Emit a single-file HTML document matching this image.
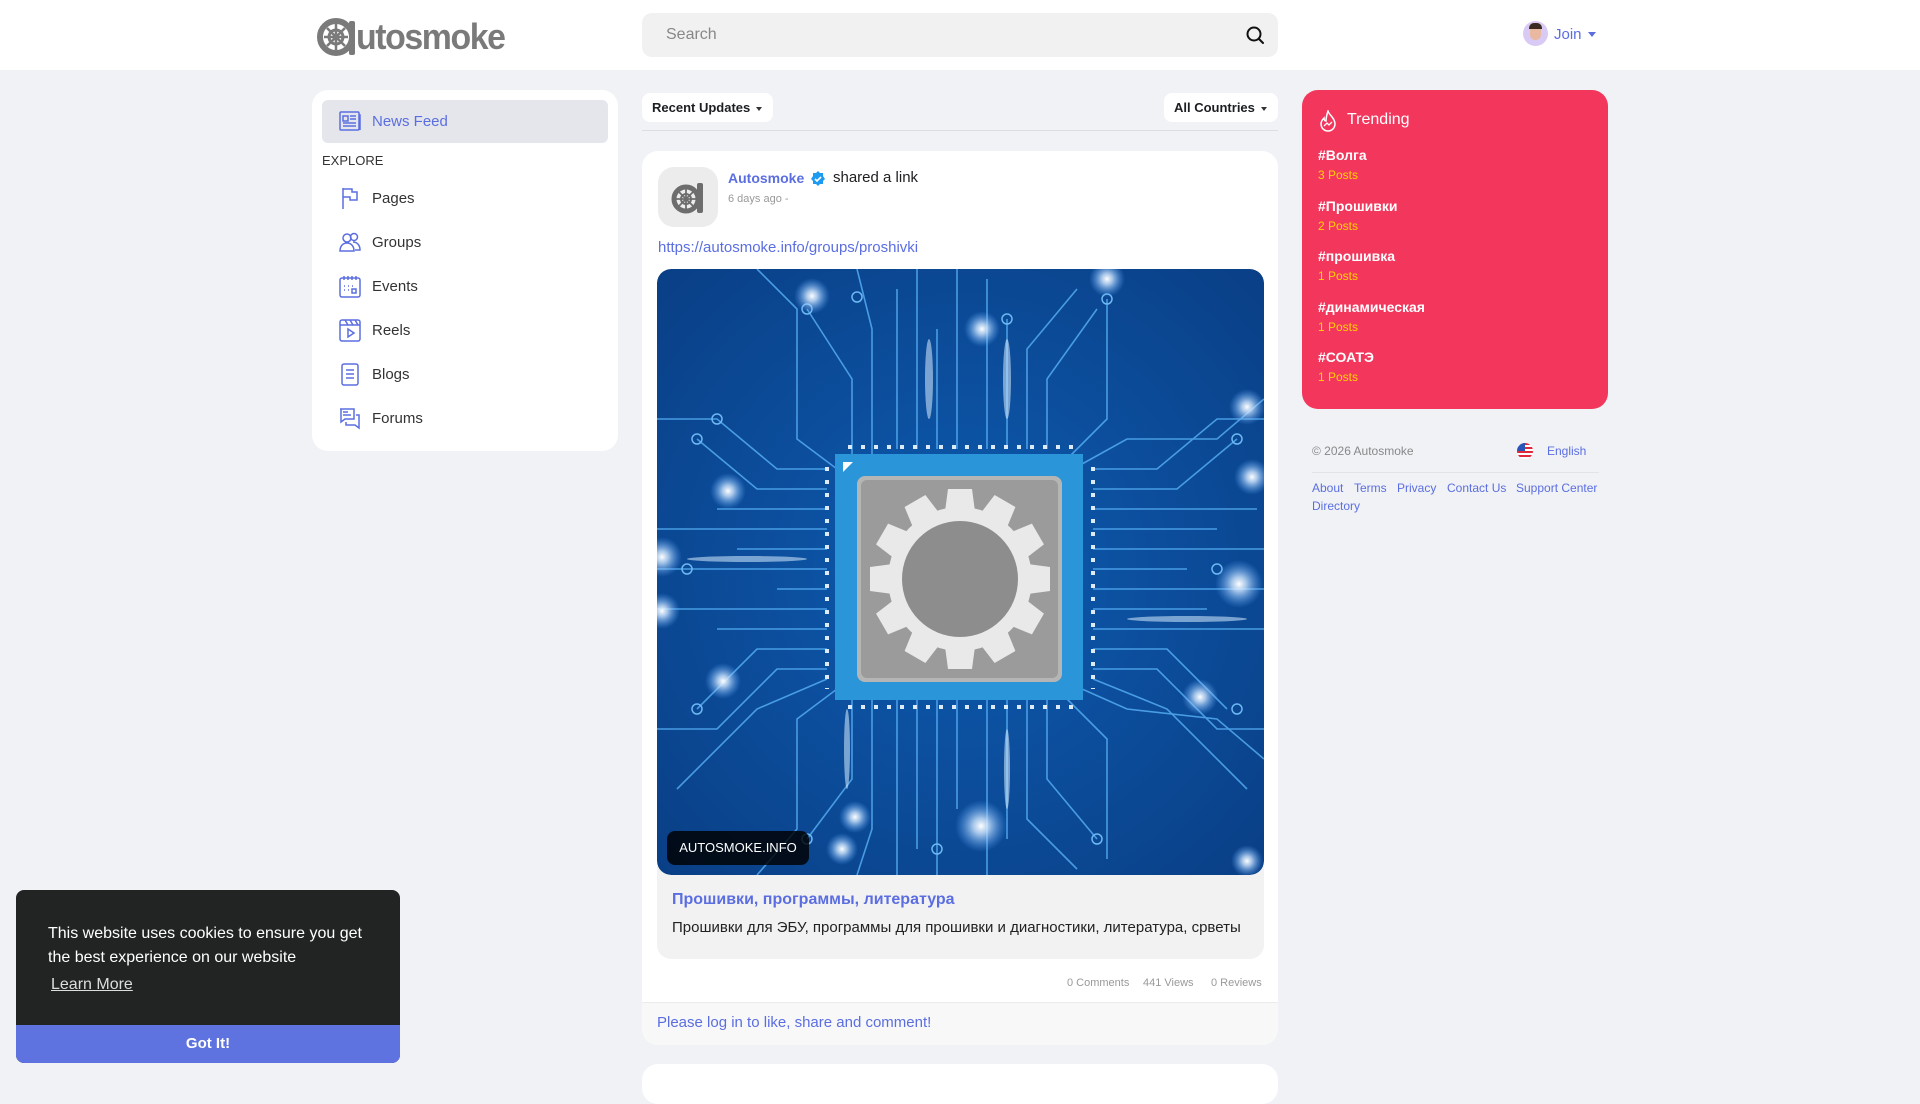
<!DOCTYPE html>
<html><head><meta charset="utf-8">
<style>
*{box-sizing:border-box;margin:0;padding:0}
body{width:1920px;height:1080px;overflow:hidden;background:#f0f2f5;font-family:"Liberation Sans","Noto Sans CJK SC",sans-serif;position:relative;color:#1c1e21}
.abs{position:absolute}
.hdr{left:0;top:0;width:1920px;height:70px;background:#fff}
.card{background:#fff;border-radius:16px}
.nav{left:322px;height:44px;width:286px;display:flex;align-items:center;padding-left:16px;font-size:15px;color:#333}
.nav svg{width:24px;height:24px;margin-right:10px}
.tr b{display:block;color:#fff;font-size:14px;font-weight:bold}
.tr span{display:block;color:#ffd400;font-size:12px;margin-top:5px}
.flink{color:#5b6ee1;font-size:12px}
.st{font-size:11px;color:#999}
</style></head><body>
<div class="abs hdr"></div>
<div class="abs" style="left:316px;top:16px;height:42px;display:flex;align-items:center">
<svg width="42" height="42" viewBox="0 0 42 42"><circle cx="20" cy="21" r="16" fill="none" stroke="#7a7a7a" stroke-width="6"/><circle cx="20" cy="21" r="7" fill="none" stroke="#7a7a7a" stroke-width="3"/><path d="M20 8v26M8 21h24M11 12l18 18M29 12L11 30" stroke="#7a7a7a" stroke-width="2.5"/><rect x="33" y="5" width="6" height="34" rx="2" fill="#7a7a7a"/></svg>
<span style="font-size:36px;font-weight:bold;color:#7a7a7a;letter-spacing:-1.5px;margin-left:-2px;line-height:1;display:inline-block;transform:scaleX(.94);transform-origin:left">utosmoke</span></div>
<div class="abs" style="left:642px;top:13px;width:636px;height:44px;background:#f1f1f1;border-radius:10px"></div>
<div class="abs" style="left:666px;top:26px;font-size:16px;color:#888">Search</div>
<svg class="abs" style="left:1245px;top:25px" width="20" height="20" viewBox="0 0 20 20"><circle cx="9" cy="9" r="6.5" fill="none" stroke="#111" stroke-width="2"/><path d="M14 14l4 4" stroke="#111" stroke-width="2" stroke-linecap="round"/></svg>
<div class="abs" style="left:1523px;top:21px;width:25px;height:25px;border-radius:50%;background:#d8c9f5"></div>
<div class="abs" style="left:1530px;top:25px;width:11px;height:15px;border-radius:5px;background:#e8b9a0"></div>
<div class="abs" style="left:1529px;top:23px;width:13px;height:6px;border-radius:5px 5px 0 0;background:#3a2a22"></div>
<div class="abs" style="left:1554px;top:26px;font-size:15px;color:#5b6ee1">Join</div>
<div class="abs" style="left:1588px;top:32px;border:4px solid transparent;border-top:5px solid #5b6ee1"></div>

<div class="abs card" style="left:312px;top:90px;width:306px;height:361px"></div>
<div class="abs" style="left:322px;top:100px;width:286px;height:43px;background:#e4e6eb;border-radius:6px"></div>
<div class="abs nav" style="top:99px;color:#5b6ee1"><svg viewBox="0 0 24 24" fill="none" stroke="#5b6ee1" stroke-width="1.5"><rect x="2" y="3" width="19" height="18" rx="1"/><path d="M21 6h1v15M5 7h5v5H5zM12 7h6M12 10h6M5 14h13M5 17h13"/></svg>News Feed</div>
<div class="abs" style="left:322px;top:153px;font-size:13px;color:#333">EXPLORE</div>
<div class="abs nav" style="top:176px"><svg viewBox="0 0 24 24" fill="none" stroke="#5b6ee1" stroke-width="1.5"><path d="M5 2v21M5 3h9v3h5v8h-7v-3H5"/></svg>Pages</div>
<div class="abs nav" style="top:220px"><svg viewBox="0 0 24 24" fill="none" stroke="#5b6ee1" stroke-width="1.5"><circle cx="9" cy="8" r="4"/><circle cx="16" cy="7" r="3.5"/><path d="M2 21c0-5 3-8 7-8s7 3 7 8zM15 12c4 0 7 3 7 8h-5"/></svg>Groups</div>
<div class="abs nav" style="top:264px"><svg viewBox="0 0 24 24" fill="none" stroke="#5b6ee1" stroke-width="1.5"><rect x="2" y="4" width="20" height="19" rx="2"/><path d="M6 2v4M10 2v4M14 2v4M18 2v4M6 12h1M10 12h1M14 12h1M6 16h1M10 16h1"/><rect x="14" y="15" width="4" height="4"/></svg>Events</div>
<div class="abs nav" style="top:308px"><svg viewBox="0 0 24 24" fill="none" stroke="#5b6ee1" stroke-width="1.5"><rect x="2" y="2" width="20" height="21" rx="2"/><path d="M2 7h20M7 2l3 5M12 2l3 5M17 2l3 5M10 11v8l6-4z"/></svg>Reels</div>
<div class="abs nav" style="top:352px"><svg viewBox="0 0 24 24" fill="none" stroke="#5b6ee1" stroke-width="1.5"><rect x="4" y="2" width="16" height="21" rx="2"/><path d="M8 8h8M8 12h8M8 16h8"/></svg>Blogs</div>
<div class="abs nav" style="top:396px"><svg viewBox="0 0 24 24" fill="none" stroke="#5b6ee1" stroke-width="1.5"><path d="M2 3h14v10H7l-4 3V3zM8 16v3h9l4 3V9h-3M5 6h5M5 9h8"/></svg>Forums</div>

<div class="abs card" style="left:642px;top:93px;width:131px;height:29px;border-radius:8px"></div>
<div class="abs" style="left:652px;top:100px;font-size:13px;font-weight:bold">Recent Updates</div>
<div class="abs" style="left:756px;top:107px;border:3px solid transparent;border-top:4px solid #333"></div>
<div class="abs card" style="left:1164px;top:93px;width:114px;height:29px;border-radius:8px"></div>
<div class="abs" style="left:1174px;top:100px;font-size:13px;font-weight:bold">All Countries</div>
<div class="abs" style="left:1261px;top:107px;border:3px solid transparent;border-top:4px solid #333"></div>
<div class="abs" style="left:642px;top:130px;width:636px;height:1px;background:#dcdde0"></div>

<div class="abs card" style="left:642px;top:151px;width:636px;height:894px;overflow:hidden">
 <div class="abs" style="left:0;top:851px;width:636px;height:43px;background:#f8f8f8;border-top:1px solid #ebebeb"></div>
</div>
<div class="abs" style="left:658px;top:167px;width:60px;height:60px;border-radius:16px;background:#ececec"></div>
<svg class="abs" style="left:670px;top:180px" width="38" height="36" viewBox="0 0 38 36"><circle cx="16" cy="19" r="12" fill="none" stroke="#6d6d6d" stroke-width="5"/><circle cx="16" cy="19" r="5" fill="none" stroke="#6d6d6d" stroke-width="2"/><path d="M16 9v20M6 19h20M9 12l14 14M23 12L9 26" stroke="#6d6d6d" stroke-width="1.8"/><rect x="27" y="3" width="6" height="30" rx="2" fill="#6d6d6d"/></svg>
<div class="abs" style="left:728px;top:170px;font-size:14px;font-weight:bold;color:#5b6ee1">Autosmoke</div>
<svg class="abs" style="left:810px;top:171px" width="16" height="16" viewBox="0 0 16 16"><path d="M8 0l2 2 3 0 0 3 2 3-2 2 0 3-3 0-2 2-2-2-3 0 0-3-2-2 2-3 0-3 3 0z" fill="#1d9bf0"/><path d="M5 8l2 2 4-4" stroke="#fff" stroke-width="1.6" fill="none"/></svg>
<div class="abs" style="left:833px;top:169px;font-size:15px">shared a link</div>
<div class="abs" style="left:728px;top:193px;font-size:11px;color:#999">6 days ago -</div>
<div class="abs" style="left:658px;top:239px;font-size:15px;color:#5b6ee1">https://autosmoke.info/groups/proshivki</div>

<div class="abs" style="left:657px;top:269px;width:607px;height:690px;background:#f2f2f2;border-radius:14px"></div>
<svg class="abs" style="left:657px;top:269px;border-radius:14px" width="607" height="606" viewBox="0 0 607 606">
<defs><radialGradient id="bg" cx="50%" cy="50%" r="70%"><stop offset="0" stop-color="#0d5bb0"/><stop offset="1" stop-color="#0a3f86"/></radialGradient>
<radialGradient id="gl"><stop offset="0" stop-color="#fff"/><stop offset=".3" stop-color="#cfe6ff" stop-opacity=".8"/><stop offset="1" stop-color="#5aa8ff" stop-opacity="0"/></radialGradient>
<clipPath id="c"><rect width="607" height="606" rx="14"/></clipPath></defs>
<g clip-path="url(#c)">
<rect width="607" height="606" fill="url(#bg)"/>
<g stroke="#4fa6ec" stroke-width="1.6" fill="none" opacity=".9">
<path d="M180 200L140 170 140 40 100 0M195 185L195 110 150 40M215 185V60L200 0M240 180V20M260 180V0M280 180V60M300 180V0M330 180V10M350 180V50M370 180V80L420 20M390 180V110L440 40M410 190L450 150 450 30M425 195L470 170 560 170 607 130"/>
<path d="M180 420L140 450 140 560 100 606M195 430V510L150 570M215 430V560L200 606M240 430V606M260 430V580M280 430V606M300 430V540M330 430V606M350 430V570M370 430V550L420 600M390 430V510L440 570M410 430L450 470 450 590M425 420L470 440 560 450 607 490"/>
<path d="M170 200L120 200 60 150 0 150M170 220H100L40 170M170 240H60M170 260H0M170 280H80M170 300H0M170 320H120M170 340H0M170 360H60M170 380L100 380 40 440M170 400L120 400 60 460 0 460M170 410L100 440 20 520"/>
<path d="M436 200H500L560 150 607 150M436 220H520L580 170M436 240H600M436 260H560M436 280H607M436 300H530M436 320H607M436 340H550M436 360H607M436 380L510 380 570 440M436 400L500 400 560 460 607 460M436 410L510 440 590 520"/>
</g>
<g fill="none" stroke="#6cb8f3" stroke-width="1.5"><circle cx="150" cy="40" r="5"/><circle cx="200" cy="28" r="5"/><circle cx="350" cy="50" r="5"/><circle cx="450" cy="30" r="5"/><circle cx="60" cy="150" r="5"/><circle cx="40" cy="170" r="5"/><circle cx="580" cy="170" r="5"/><circle cx="150" cy="570" r="5"/><circle cx="280" cy="580" r="5"/><circle cx="440" cy="570" r="5"/><circle cx="40" cy="440" r="5"/><circle cx="580" cy="440" r="5"/><circle cx="30" cy="300" r="5"/><circle cx="560" cy="300" r="5"/></g>
<g fill="url(#gl)"><circle cx="155" cy="27" r="18"/><circle cx="325" cy="60" r="18"/><circle cx="450" cy="10" r="18"/><circle cx="71" cy="222" r="18"/><circle cx="590" cy="138" r="18"/><circle cx="595" cy="208" r="18"/><circle cx="582" cy="315" r="24"/><circle cx="5" cy="288" r="20"/><circle cx="5" cy="342" r="18"/><circle cx="66" cy="412" r="18"/><circle cx="543" cy="428" r="18"/><circle cx="324" cy="557" r="26"/><circle cx="198" cy="548" r="16"/><circle cx="185" cy="580" r="16"/><circle cx="590" cy="592" r="16"/></g>
<g fill="#d7ecff" opacity=".55"><ellipse cx="272" cy="110" rx="4" ry="40"/><ellipse cx="350" cy="110" rx="4" ry="40"/><ellipse cx="90" cy="290" rx="60" ry="3"/><ellipse cx="530" cy="350" rx="60" ry="3"/><ellipse cx="190" cy="480" rx="3" ry="40"/><ellipse cx="350" cy="500" rx="3" ry="40"/></g>
<g stroke="#dcebf7" stroke-width="4" stroke-dasharray="4 9"><path d="M191 178H420"/><path d="M191 438H420"/><path d="M170 198V420"/><path d="M436 198V420"/></g>
<rect x="178" y="185" width="248" height="246" fill="#2a95d8"/>
<path d="M186 193h10l-10 10z" fill="#fff"/>
<rect x="200" y="207" width="205" height="206" rx="8" fill="#b5b5b5"/>
<rect x="204" y="211" width="197" height="198" rx="6" fill="#9b9b9b"/>
<g transform="translate(303 310)">
<g fill="#e9e9e9">
<path d="M-12 -90h24l4 30h-32z"/><path d="M-12 -90h24l4 30h-32z" transform="rotate(30)"/><path d="M-12 -90h24l4 30h-32z" transform="rotate(60)"/><path d="M-12 -90h24l4 30h-32z" transform="rotate(90)"/><path d="M-12 -90h24l4 30h-32z" transform="rotate(120)"/><path d="M-12 -90h24l4 30h-32z" transform="rotate(150)"/><path d="M-12 -90h24l4 30h-32z" transform="rotate(180)"/><path d="M-12 -90h24l4 30h-32z" transform="rotate(210)"/><path d="M-12 -90h24l4 30h-32z" transform="rotate(240)"/><path d="M-12 -90h24l4 30h-32z" transform="rotate(270)"/><path d="M-12 -90h24l4 30h-32z" transform="rotate(300)"/><path d="M-12 -90h24l4 30h-32z" transform="rotate(330)"/>
<circle r="72"/></g>
<circle r="58" fill="#8d8d8d"/></g>
</g></svg>
<div class="abs" style="left:667px;top:831px;width:142px;height:34px;background:rgba(0,0,0,.82);border-radius:8px;color:#fff;font-size:13px;line-height:34px;text-align:center">AUTOSMOKE.INFO</div>
<div class="abs" style="left:672px;top:891px;font-size:16px;font-weight:bold;color:#5b6ee1">Прошивки, программы, литература</div>
<div class="abs" style="left:672px;top:919px;font-size:15px;color:#222">Прошивки для ЭБУ, программы для прошивки и диагностики, литература, срветы</div>
<div class="abs st" style="left:1067px;top:977px">0 Comments</div>
<div class="abs st" style="left:1143px;top:977px">441 Views</div>
<div class="abs st" style="left:1211px;top:977px">0 Reviews</div>
<div class="abs" style="left:657px;top:1014px;font-size:15px;color:#5b6ee1">Please log in to like, share and comment!</div>
<div class="abs card" style="left:642px;top:1064px;width:636px;height:40px"></div>

<div class="abs" style="left:1302px;top:90px;width:306px;height:319px;background:#f3365c;border-radius:16px"></div>
<svg class="abs" style="left:1319px;top:110px" width="18" height="22" viewBox="0 0 18 22"><path d="M9 1c1 4 7 7 7 13a7 7 0 0 1-14 0c0-3 2-5 3-6 0 2 1 3 2 3 0-4 1-7 2-10z" fill="none" stroke="#fff" stroke-width="1.5"/><path d="M5 16l3-3 2 2 3-3" fill="none" stroke="#fff" stroke-width="1.3"/></svg>
<div class="abs" style="left:1347px;top:111px;font-size:16px;color:#fff">Trending</div>
<div class="abs tr" style="left:1318px;top:147px"><b>#Волга</b><span>3 Posts</span></div>
<div class="abs tr" style="left:1318px;top:198px"><b>#Прошивки</b><span>2 Posts</span></div>
<div class="abs tr" style="left:1318px;top:248px"><b>#прошивка</b><span>1 Posts</span></div>
<div class="abs tr" style="left:1318px;top:299px"><b>#динамическая</b><span>1 Posts</span></div>
<div class="abs tr" style="left:1318px;top:349px"><b>#СОАТЭ</b><span>1 Posts</span></div>

<div class="abs" style="left:1312px;top:444px;font-size:12px;color:#888">© 2026 Autosmoke</div>
<svg class="abs" style="left:1517px;top:443px" width="16" height="16" viewBox="0 0 16 16"><clipPath id="fc"><circle cx="8" cy="8" r="8"/></clipPath><g clip-path="url(#fc)"><rect width="16" height="16" fill="#fff"/><path d="M0 1h16M0 5h16M0 9h16M0 13h16" stroke="#e0283c" stroke-width="2"/><rect width="8" height="8" fill="#2a55b8"/></g></svg>
<div class="abs flink" style="left:1547px;top:444px">English</div>
<div class="abs" style="left:1312px;top:472px;width:287px;height:1px;background:#e3e4e7"></div>
<div class="abs flink" style="left:1312px;top:481px">About</div>
<div class="abs flink" style="left:1354px;top:481px">Terms</div>
<div class="abs flink" style="left:1397px;top:481px">Privacy</div>
<div class="abs flink" style="left:1447px;top:481px">Contact Us</div>
<div class="abs flink" style="left:1516px;top:481px">Support Center</div>
<div class="abs flink" style="left:1312px;top:499px">Directory</div>

<div class="abs" style="left:16px;top:890px;width:384px;height:173px;background:#212423;border-radius:8px;overflow:hidden">
 <div style="position:absolute;left:32px;top:32px;width:330px;color:#fff;font-size:16px;line-height:24px">This website uses cookies to ensure you get the best experience on our website</div>
 <div style="position:absolute;left:35px;top:86px;color:#ddd;font-size:16px;text-decoration:underline">Learn More</div>
 <div style="position:absolute;left:0;top:135px;width:384px;height:38px;background:#5f73e0;color:#fff;font-weight:bold;font-size:15px;text-align:center;line-height:38px">Got It!</div>
</div>
</body></html>
